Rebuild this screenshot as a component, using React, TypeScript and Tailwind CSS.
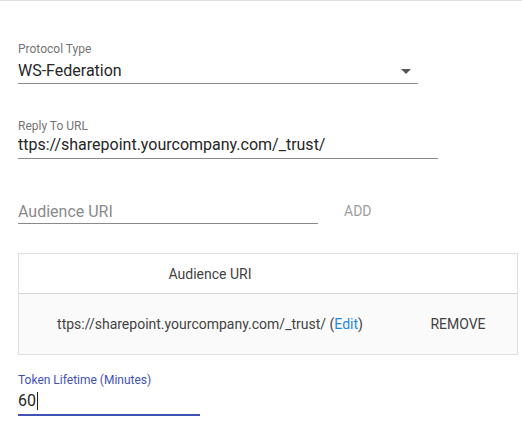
import React from "react";

export default function App() {
  return (
    <div
      className="w-[522px] h-[422px] bg-white border-t border-[#e0e0e0] overflow-hidden"
      style={{ fontFamily: "Roboto, 'Noto Sans', sans-serif" }}
    >
      <div className="pl-[18px]">
        {/* Protocol Type */}
        <div className="mt-[41px] w-[400px]">
          <div className="text-[12px] leading-[14px] text-[#757575]">Protocol Type</div>
          <div className="mt-[5px] flex items-center justify-between pr-[7px] pb-[3px] border-b border-[#8a8a8a]">
            <span className="text-[16px] leading-[19px] text-[#262626]">WS-Federation</span>
            <svg width="10" height="5" viewBox="0 0 10 5" className="mt-[1px]">
              <path d="M0 0 L10 0 L5 5 Z" fill="#555555" />
            </svg>
          </div>
        </div>

        {/* Reply To URL */}
        <div className="mt-[35px] w-[420px]">
          <div className="text-[12px] leading-[14px] text-[#757575]">Reply To URL</div>
          <div className="mt-[2px] pb-[4px] border-b border-[#8a8a8a] text-[16px] leading-[19px] text-[#262626]">
            ttps://sharepoint.yourcompany.com/_trust/
          </div>
        </div>

        {/* Audience URI input + ADD */}
        <div className="mt-[43px] flex items-end">
          <div className="w-[300px] pb-[2px] border-b border-[#8a8a8a] text-[16px] leading-[19px] text-[#8a8a8a]">
            Audience URI
          </div>
          <div className="ml-[26px] mb-[5px] text-[14px] leading-[16px] text-[#9e9e9e]">ADD</div>
        </div>

        {/* Table */}
        <div className="mt-[29px] w-[500px] border border-[#e0e0e0]">
          <div className="flex h-[40px] items-center border-b border-[#d6d6d6] bg-white">
            <div className="w-[382px] text-center text-[14px] leading-[16px] text-[#424242]">Audience URI</div>
            <div className="flex-1" />
          </div>
          <div className="flex h-[60px] items-center bg-[#fafafa]">
            <div className="w-[382px] text-center text-[14px] leading-[16px] text-[#424242]">
              ttps://sharepoint.yourcompany.com/_trust/ (<span className="text-[#1e88e5]">Edit</span>)
            </div>
            <div className="flex-1 text-center text-[14px] leading-[16px] text-[#424242] pr-[2px]">REMOVE</div>
          </div>
        </div>

        {/* Token Lifetime */}
        <div className="mt-[18px] w-[182px]">
          <div className="text-[12px] leading-[14px] text-[#3f51b5]">Token Lifetime (Minutes)</div>
          <div className="mt-[4px] pb-[4px] border-b-2 border-[#3f51b5] flex items-center">
            <span className="text-[16px] leading-[19px] text-[#262626]">60</span>
            <span className="inline-block w-px h-[18px] bg-[#212121] ml-[1px]" />
          </div>
        </div>
      </div>
    </div>
  );
}
